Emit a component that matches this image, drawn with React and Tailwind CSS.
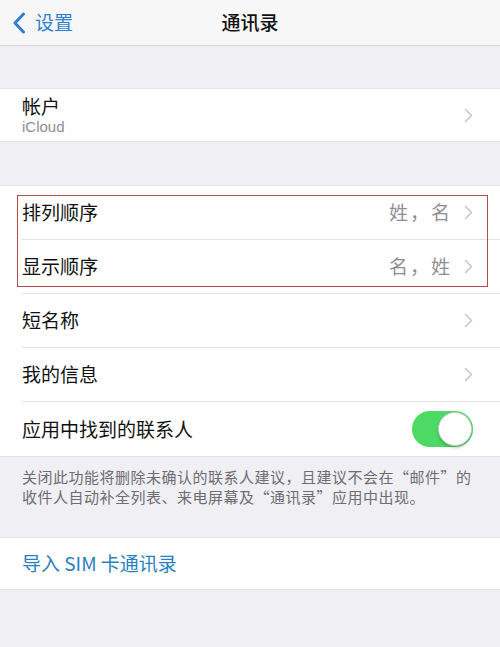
import React from "react";

const font = { fontFamily: '"Noto Sans CJK SC", "Noto Sans", sans-serif' };

function Chevron() {
  return (
    <svg width="9" height="15" viewBox="0 0 9 15" className="shrink-0">
      <path d="M1.5 1.5 L7.5 7.5 L1.5 13.5" fill="none" stroke="#c7c7cc" strokeWidth="1.6" strokeLinecap="round" strokeLinejoin="round" />
    </svg>
  );
}

function Row({ title, value, chevron = true, last = false, children }) {
  return (
    <div className="flex h-[54px] pl-[22px]">
      <div className={"flex flex-1 items-center pr-[27px] " + (last ? "" : "border-b border-[#e3e3e6]")}>
        <span className="flex-1 text-[19px] text-[#111]">{title}</span>
        {value && <span className="mr-[12px] text-[19px] text-[#8e8e93] tracking-[2px]">{value}</span>}
        {chevron && <Chevron />}
        {children}
      </div>
    </div>
  );
}

export default function App() {
  return (
    <div className="w-[500px] h-[647px] bg-[#efeff4] overflow-hidden" style={font}>
      {/* Nav bar */}
      <div className="relative flex h-[46px] items-center bg-[#f7f7f8] border-b border-[#d6d6da]">
        <div className="flex items-center pl-[12px] text-[#2f7fd0]">
          <svg width="14" height="22" viewBox="0 0 14 22">
            <path d="M11.5 2 L3 11 L11.5 20" fill="none" stroke="#2f7fd0" strokeWidth="3" strokeLinecap="round" strokeLinejoin="round" />
          </svg>
          <span className="ml-[9px] text-[19px]">设置</span>
        </div>
        <div className="absolute inset-x-0 text-center text-[19px] font-medium text-[#111] pointer-events-none">通讯录</div>
      </div>

      <div className="h-[42px]" />

      {/* Account */}
      <div className="bg-white border-y border-[#e3e3e6]">
        <div className="flex h-[52px] items-center pl-[22px] pr-[27px]">
          <div className="flex-1 flex flex-col">
            <span className="text-[19px] text-[#111] leading-[24px]">帐户</span>
            <span className="text-[15px] text-[#8e8e93] leading-[18px]" style={{ fontFamily: '"Liberation Sans", "Noto Sans CJK SC", sans-serif' }}>iCloud</span>
          </div>
          <Chevron />
        </div>
      </div>

      <div className="h-[43px]" />

      {/* Main group */}
      <div className="relative bg-white border-y border-[#e3e3e6]">
        <Row title="排列顺序" value="姓，名" />
        <Row title="显示顺序" value="名，姓" />
        <Row title="短名称" />
        <Row title="我的信息" />
        <Row title="应用中找到的联系人" chevron={false} last>
          <div className="relative h-[36px] w-[61px] rounded-full bg-[#4cd964]">
            <div className="absolute right-[1px] top-[1px] h-[34px] w-[34px] rounded-full bg-white border border-[#c8d0c8] shadow-[0_2px_3px_rgba(0,0,0,0.2)]" />
          </div>
        </Row>
        <div className="absolute left-[17px] top-[9px] h-[92px] w-[471px] border-[1.5px] border-[#b44a4c] pointer-events-none" />
      </div>

      {/* Footer */}
      <div className="px-[22px] pt-[10px] pb-[30px] text-[15px] leading-[20px] tracking-[0.5px] whitespace-nowrap text-[#6d6d72]">
        关闭此功能将删除未确认的联系人建议，且建议不会在“邮件”的<br />收件人自动补全列表、来电屏幕及“通讯录”应用中出现。
      </div>

      {/* Import */}
      <div className="bg-white border-y border-[#e3e3e6]">
        <div className="flex h-[51px] items-center pl-[22px] text-[19px] text-[#2a7fc0]">导入 SIM 卡通讯录</div>
      </div>
    </div>
  );
}
